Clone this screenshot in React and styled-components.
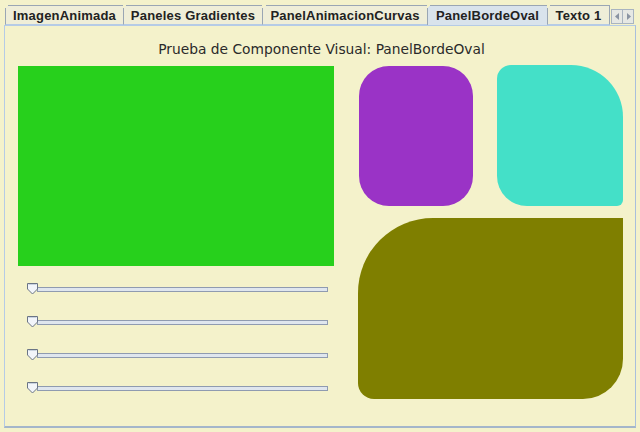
import React from "react";
import styled, { createGlobalStyle } from "styled-components";

const Global = createGlobalStyle`
  html, body { margin: 0; padding: 0; background: #f4f2cb; }
  * { box-sizing: border-box; }
`;

const Frame = styled.div`
  width: 640px;
  height: 432px;
  background: #f4f2cb;
  display: flex;
  flex-direction: column;
  font-family: "DejaVu Sans", Verdana, sans-serif;
  overflow: hidden;
`;

const TabBar = styled.div`
  display: flex;
  align-items: flex-end;
  height: 25px;
  padding: 5px 0 0 5px;
`;

const Tab = styled.div`
  position: relative;
  width: ${(p) => p.$w}px;
  height: 20px;
  display: flex;
  align-items: center;
  justify-content: center;
  border: 1px solid #9aa6b4;
  border-bottom: ${(p) => (p.$active ? "none" : "1px solid #b5cbe6")};
  margin-right: -1px;
  background: ${(p) => (p.$active ? "#d9e3ec" : "#efeed8")};
  font-family: "Liberation Sans", Arial, sans-serif;
  font-weight: bold;
  font-size: 13px;
  letter-spacing: 0.2px;
  color: #222;
  white-space: nowrap;
  &::before {
    content: "";
    position: absolute;
    left: -1px;
    top: -1px;
    width: 4px;
    height: 4px;
    background: linear-gradient(135deg, #f4f2cb 50%, transparent 50%);
  }
`;

const Scroller = styled.div`
  display: flex;
  margin-left: 3px;
  height: 15px;
  align-self: flex-end;
  margin-bottom: 1px;
`;

const ScrollBtn = styled.div`
  width: 12px;
  height: 15px;
  border: 1px solid #a9b4c0;
  margin-left: -1px;
  background: #e6e8e4;
  display: flex;
  align-items: center;
  justify-content: center;
`;

const Panel = styled.div`
  margin: 0 4px 4px 4px;
  flex: 1;
  border: 1px solid #b5cbe6;
  border-right: 1px solid #a9bfdc;
  border-bottom: 2px solid #a4b6ca;
  display: flex;
  flex-direction: column;
  padding: 15px 13px 0 13px;
`;

const Title = styled.div`
  text-align: center;
  font-size: 13.8px;
  color: #2a2a2a;
  height: 19px;
  line-height: 17px;
  padding-left: 3px;
`;

const Body = styled.div`
  display: flex;
  gap: 24px;
  margin-top: 6px;
`;

const LeftCol = styled.div`
  width: 316px;
  display: flex;
  flex-direction: column;
`;

const GreenBox = styled.div`
  width: 316px;
  height: 200px;
  background: #27d01c;
`;

const Sliders = styled.div`
  display: flex;
  flex-direction: column;
  gap: 21px;
  margin-top: 16px;
  padding-left: 8px;
`;

const SliderRow = styled.div`
  position: relative;
  height: 12px;
  width: 302px;
`;

const Track = styled.div`
  position: absolute;
  left: 11px;
  right: 0;
  top: 5px;
  height: 5px;
  border: 1px solid #8f9bb0;
  background: #dfe6ee;
`;

const Thumb = styled.svg`
  position: absolute;
  left: 0;
  top: 0;
`;

const RightCol = styled.div`
  width: 265px;
  display: flex;
  flex-direction: column;
`;

const TopShapes = styled.div`
  display: flex;
  justify-content: space-between;
  align-items: flex-start;
`;

const Shape = styled.div`
  width: ${(p) => p.$w}px;
  height: ${(p) => p.$h}px;
  background: ${(p) => p.$c};
  border-radius: ${(p) => p.$r};
  margin: ${(p) => p.$m || "0"};
`;

const Slider = () => (
  <SliderRow>
    <Track />
    <Thumb width="13" height="13" viewBox="0 0 13 13">
      <path d="M1.5 1.5 H11.5 V7 L6.5 12 L1.5 7 Z" fill="#f2f5fa" stroke="#6b7585" strokeWidth="1" />
      <path d="M2.5 2.5 H10.5" stroke="#c9d3e0" />
    </Thumb>
  </SliderRow>
);

const tabs = [
  { t: "ImagenAnimada", w: 119 },
  { t: "Paneles Gradientes", w: 140 },
  { t: "PanelAnimacionCurvas", w: 166 },
  { t: "PanelBordeOval", w: 121, a: true },
  { t: "Texto 1", w: 63 },
];

export default function App() {
  return (
    <>
      <Global />
      <Frame>
        <TabBar>
          {tabs.map((x) => (
            <Tab key={x.t} $w={x.w} $active={x.a}>
              {x.t}
            </Tab>
          ))}
          <Scroller>
            <ScrollBtn>
              <svg width="5" height="7" viewBox="0 0 5 7">
                <path d="M4 0 L0 3.5 L4 7 Z" fill="#8a94a2" />
              </svg>
            </ScrollBtn>
            <ScrollBtn>
              <svg width="5" height="7" viewBox="0 0 5 7">
                <path d="M1 0 L5 3.5 L1 7 Z" fill="#8a94a2" />
              </svg>
            </ScrollBtn>
          </Scroller>
        </TabBar>
        <Panel>
          <Title>Prueba de Componente Visual: PanelBordeOval</Title>
          <Body>
            <LeftCol>
              <GreenBox />
              <Sliders>
                <Slider />
                <Slider />
                <Slider />
                <Slider />
              </Sliders>
            </LeftCol>
            <RightCol>
              <TopShapes>
                <Shape $w={114} $h={140} $c="#9a33c6" $r="30px" $m="0 0 0 1px" />
                <Shape $w={126} $h={141} $c="#44e0c8" $r="14px 52px 6px 30px" $m="-1px 0 0 0" />
              </TopShapes>
              <Shape $w={265} $h={181} $c="#7f7f00" $r="75px 0 40px 16px" $m="12px 0 0 0" />
            </RightCol>
          </Body>
        </Panel>
      </Frame>
    </>
  );
}
